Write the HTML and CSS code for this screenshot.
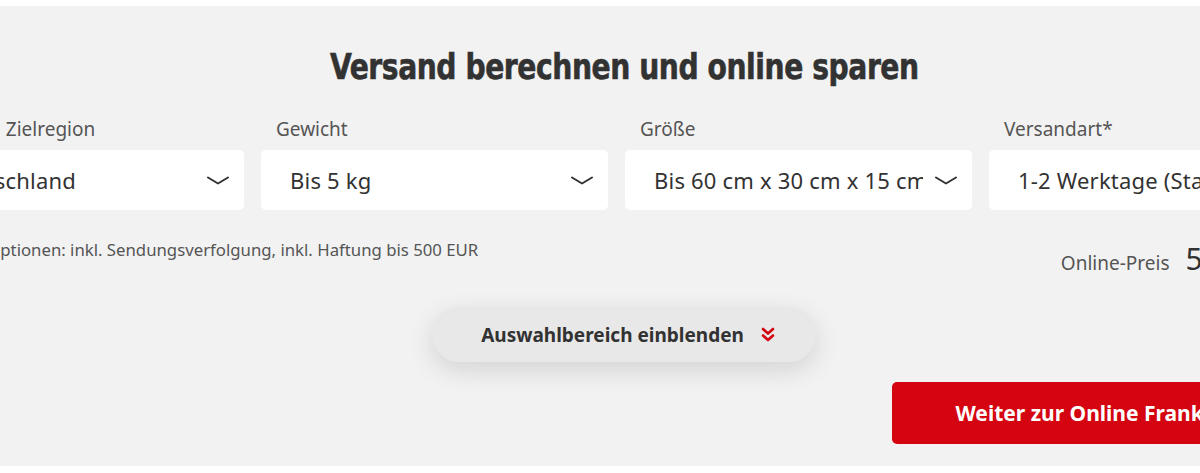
FILE: index.html
```html
<!DOCTYPE html>
<html lang="de">
<head>
    <meta charset="UTF-8">
    <meta name="viewport" content="width=device-width, initial-scale=1.0">
    <title>Versand berechnen</title>
    <link rel="stylesheet" href="styles.css">
</head>
<body>
    <section class="calculator">
        <div class="calculator-inner">
            <h2 class="calc-title"><span>Versand berechnen und online sparen</span></h2>

            <div class="fields">
                <div class="field">
                    <span class="field-label">Start- und Zielregion</span>
                    <div class="select select-region">
                        <span class="select-value">Deutschland</span>
                        <svg class="chevron" viewBox="0 0 22 9" width="22" height="9"><path d="M1 1.5 L11 7.5 L21 1.5" /></svg>
                    </div>
                </div>
                <div class="field">
                    <span class="field-label">Gewicht</span>
                    <div class="select">
                        <span class="select-value">Bis 5 kg</span>
                        <svg class="chevron" viewBox="0 0 22 9" width="22" height="9"><path d="M1 1.5 L11 7.5 L21 1.5" /></svg>
                    </div>
                </div>
                <div class="field">
                    <span class="field-label">Größe</span>
                    <div class="select">
                        <span class="select-value">Bis 60 cm x 30 cm x 15 cm</span>
                        <svg class="chevron" viewBox="0 0 22 9" width="22" height="9"><path d="M1 1.5 L11 7.5 L21 1.5" /></svg>
                    </div>
                </div>
                <div class="field">
                    <span class="field-label">Versandart*</span>
                    <div class="select">
                        <span class="select-value">1-2 Werktage (Standard)</span>
                        <svg class="chevron" viewBox="0 0 22 9" width="22" height="9"><path d="M1 1.5 L11 7.5 L21 1.5" /></svg>
                    </div>
                </div>
            </div>

            <div class="summary">
                <p class="options">Versandoptionen: inkl. Sendungsverfolgung, inkl. Haftung bis 500 EUR</p>
                <div class="price">
                    <span class="price-label">Online-Preis</span>
                    <span class="price-value">5,49 €</span>
                </div>
            </div>

            <div class="toggle-row">
                <button class="toggle">
                    Auswahlbereich einblenden
                    <svg class="double-chevron" viewBox="0 0 14 16" width="14" height="16"><path d="M2 2 L7 6.5 L12 2 M2 8.5 L7 13 L12 8.5" /></svg>
                </button>
            </div>

            <div class="actions">
                <button class="primary">Weiter zur Online Frankierung</button>
            </div>
        </div>
    </section>
</body>
</html>
```

FILE: styles.css
```css
body {
    margin: 0;
    padding-top: 6px;
    background-color: #ffffff;
    font-family: "Noto Sans", "Open Sans", Arial, sans-serif;
    color: #323232;
    overflow: hidden;
}

.calculator {
    height: 460px;
    background-color: #f2f2f2;
}

.calculator-inner {
    width: 1456px;
    margin-left: -104px;
    padding-top: 39px;
}

.calc-title {
    margin: 0;
    text-align: center;
    font-family: "DejaVu Sans", "Liberation Sans", sans-serif;
    font-stretch: condensed;
    font-weight: 800;
    font-size: 36px;
    line-height: 43px;
    letter-spacing: -0.5px;
    color: #323232;
    -webkit-text-stroke: 0.6px #323232;
}

.calc-title span {
    display: inline-block;
    transform: scaleX(0.87);
}

.fields {
    display: grid;
    grid-template-columns: repeat(4, 347px);
    gap: 17px;
    margin-top: 28px;
    padding-left: 1px;
}

.field {
    display: flex;
    flex-direction: column;
}

.field-label {
    padding-left: 15px;
    font-size: 19px;
    line-height: 26px;
    color: #555555;
    margin-bottom: 8px;
}

.select {
    display: flex;
    align-items: center;
    height: 60px;
    padding: 0 15px 0 29px;
    background-color: #ffffff;
    border-radius: 5px;
}

.select-region {
    padding-left: 47px;
}

.select-value {
    flex: 1;
    overflow: hidden;
    white-space: nowrap;
    font-size: 22px;
    letter-spacing: 0.2px;
    color: #323232;
    margin-right: 12px;
}

.chevron path {
    fill: none;
    stroke: #323232;
    stroke-width: 2;
    stroke-linecap: round;
    stroke-linejoin: round;
}

.summary {
    display: flex;
    justify-content: space-between;
    align-items: flex-start;
    padding: 0 82px 0 30px;
}

.options {
    margin: 28px 0 0;
    font-size: 16.75px;
    color: #555555;
}

.price {
    display: flex;
    align-items: baseline;
    gap: 16px;
    margin-top: 28px;
}

.price-label {
    font-size: 19px;
    color: #555555;
}

.price-value {
    font-size: 30px;
    color: #323232;
}

.toggle-row {
    display: flex;
    justify-content: center;
    margin-top: 28px;
}

.toggle {
    display: flex;
    align-items: center;
    gap: 17px;
    height: 55px;
    padding: 0 41px 0 49px;
    border: none;
    border-radius: 28px;
    background-color: #e8e8e8;
    box-shadow: 0 8px 26px rgba(0, 0, 0, 0.13);
    font-family: "Noto Sans", Arial, sans-serif;
    font-size: 19px;
    font-weight: 700;
    color: #323232;
    cursor: pointer;
}

.double-chevron path {
    fill: none;
    stroke: #d40511;
    stroke-width: 2.6;
    stroke-linecap: round;
    stroke-linejoin: round;
}

.actions {
    display: flex;
    justify-content: flex-end;
    padding-right: 16px;
    margin-top: 20px;
}

.primary {
    width: 444px;
    height: 62px;
    border: none;
    border-radius: 5px;
    background-color: #d40511;
    color: #ffffff;
    font-family: "Noto Sans", Arial, sans-serif;
    font-size: 21px;
    font-weight: 700;
    cursor: pointer;
}
```
